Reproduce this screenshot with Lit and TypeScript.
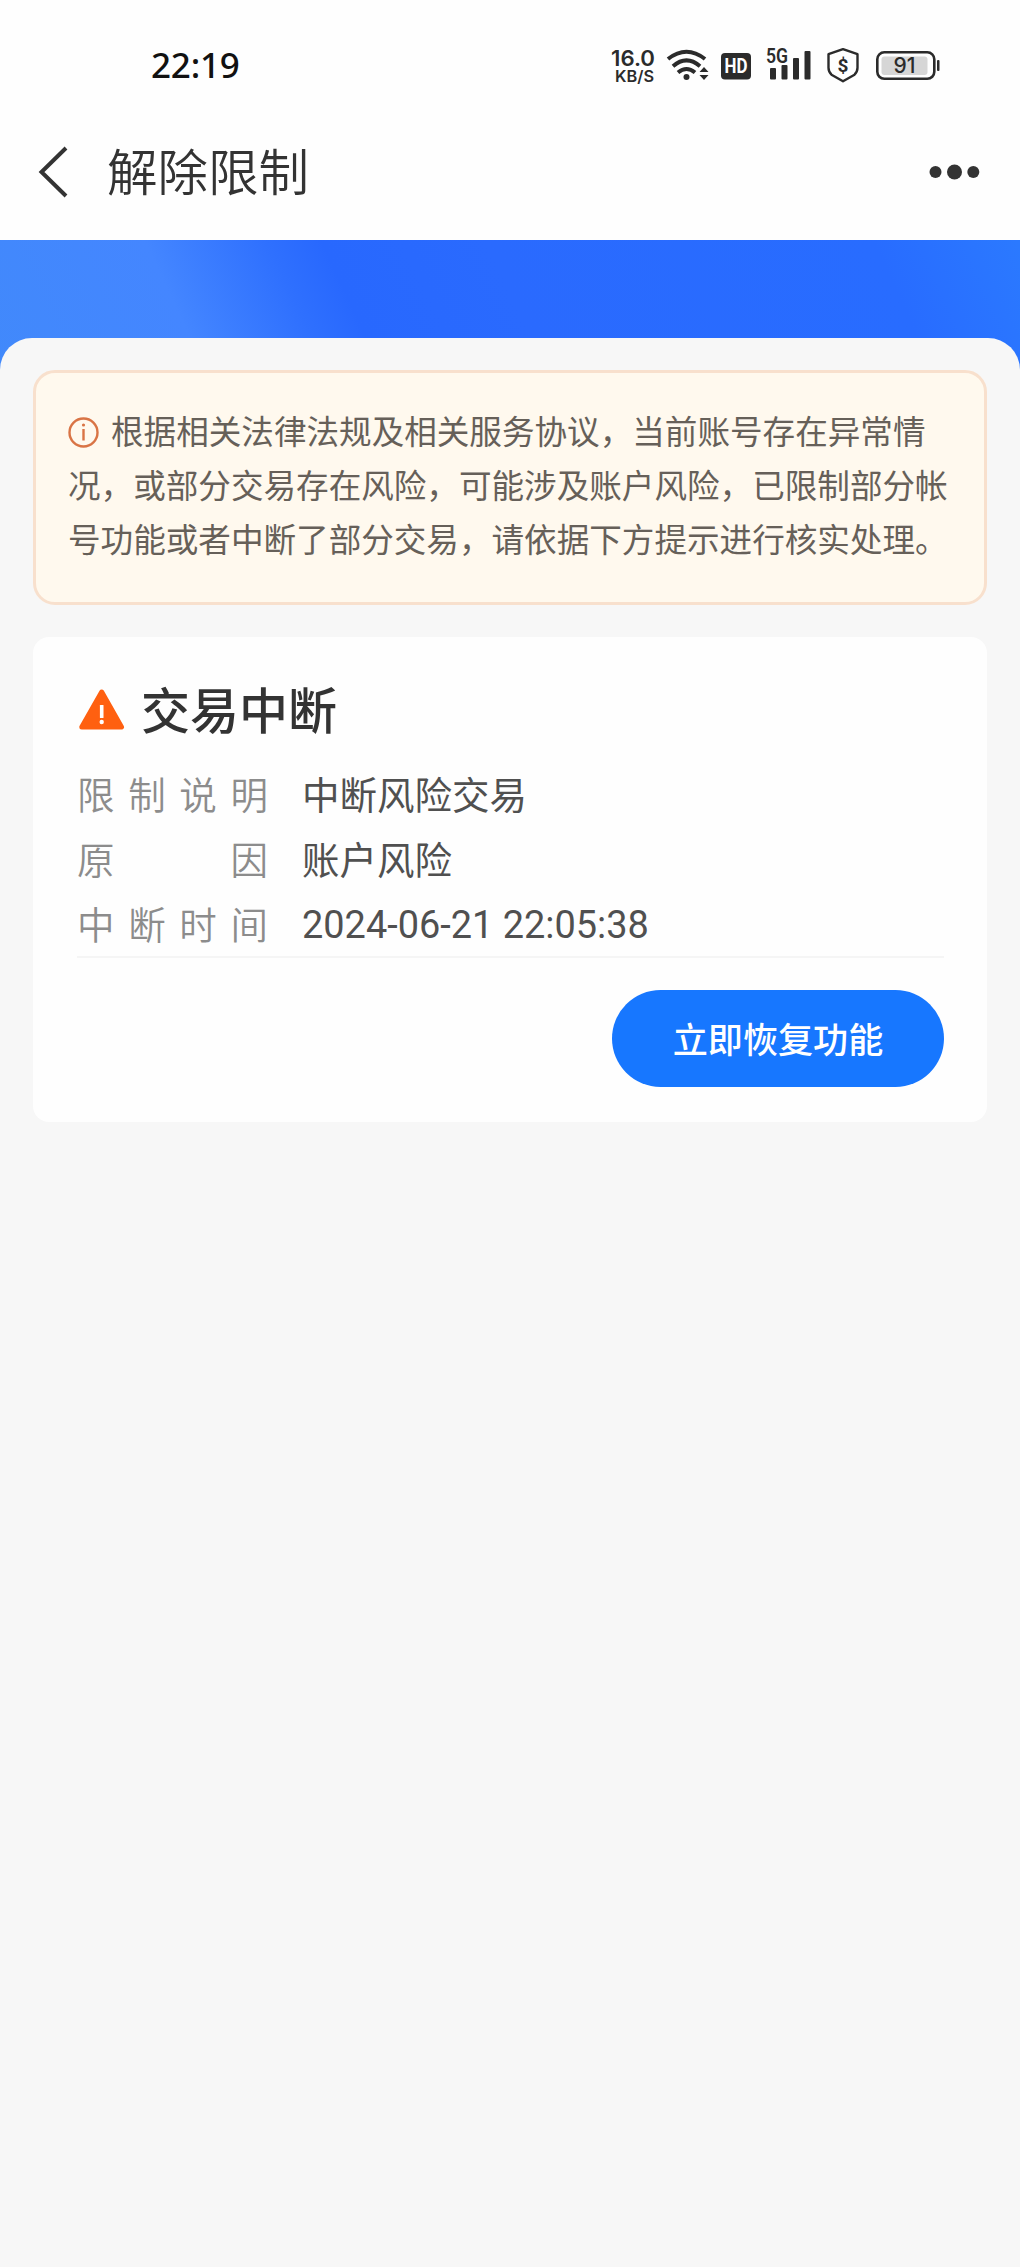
import { LitElement, html, css, svg } from "lit";
import { customElement } from "lit/decorators.js";

const INK = "#2b2b2b";

@customElement("status-bar")
class StatusBar extends LitElement {
  static styles = css`
    :host { display: flex; justify-content: space-between; align-items: flex-start; height: 104px; padding: 0 76px 0 151px; }
    .time { font: 500 35px/50px "Noto Sans", sans-serif; color: #111; padding-top: 40px; letter-spacing: -0.2px; }
    .icons { display: flex; padding-top: 40px; }
    svg { display: block; font-family: Roboto, sans-serif; }
  `;
  render() {
    return html`
      <div class="time">22:19</div>
      <div class="icons">
        <svg width="50" height="50" viewBox="610 40 50 50" fill="${INK}">
          <text x="611" y="66" font-size="21.500" font-weight="600" font-family="Inter" textLength="44" lengthAdjust="spacingAndGlyphs">16.0</text>
          <text x="615" y="82" font-size="16" font-weight="600" font-family="Inter" textLength="39" lengthAdjust="spacingAndGlyphs">KB/S</text>
        </svg>
        <svg width="55" height="50" viewBox="660 40 55 50" fill="none" stroke="${INK}" stroke-width="4">
          <path d="M668 59Q686.500 44.500 705 59M673 66.200Q686.500 54.500 700 66.200M678 72.500Q686.500 65.500 695 72.500" />
          <circle cx="686.500" cy="77" r="3" fill="${INK}" stroke="none" />
          <path d="M699.500 72h9L704 67zM699.500 75h9L704 80z" fill="${INK}" stroke="none" />
        </svg>
        <svg width="45" height="50" viewBox="715 40 45 50">
          <rect x="721" y="53" width="30" height="26.500" rx="4" fill="${INK}" />
          <text x="724.500" y="73" font-size="19.500" font-weight="700" fill="#fff" textLength="23" lengthAdjust="spacingAndGlyphs">HD</text>
        </svg>
        <svg width="60" height="50" viewBox="760 40 60 50" fill="${INK}">
          <text x="766" y="63" font-size="19.500" font-weight="600" textLength="22" lengthAdjust="spacingAndGlyphs">5G</text>
          ${[[770, 68], [781.5, 65], [793, 58], [804.5, 51]].map(
            ([x, y]) => svg`<rect x=${x} y=${y} width="6" height=${79.5 - y} rx="1" />`,
          )}
        </svg>
        <svg width="50" height="50" viewBox="820 40 50 50">
          <path d="M843 49.500L857.500 54.500V68Q857.500 72 854.500 75L843 81.500L831.500 75Q828.500 72 828.500 68V54.500Z" fill="none" stroke="${INK}" stroke-width="2.400" stroke-linejoin="round" transform="translate(0 -.3)" />
          <text x="843" y="71.500" text-anchor="middle" font-size="19" font-weight="700" fill="${INK}">$</text>
        </svg>
        <svg width="74" height="50" viewBox="870 40 74 50">
          <rect x="877.300" y="52.300" width="57" height="26.500" rx="7" fill="none" stroke="${INK}" stroke-width="2.600" />
          <rect x="881.500" y="56.500" width="46" height="18.500" rx="3" fill="#d6d6d6" />
          <rect x="937" y="60" width="2.500" height="11" rx="1" fill="${INK}" />
          <text x="904.500" y="73.300" text-anchor="middle" font-size="21" font-weight="500" font-family="Inter" fill="${INK}">91</text>
        </svg>
      </div>
    `;
  }
}

@customElement("nav-bar")
class NavBar extends LitElement {
  static styles = css`
    :host { display: flex; align-items: center; height: 136px; }
    .back { margin-left: 29px; }
    .title { flex: 1; margin: 0 0 6px 28px; font-size: 50.5px; line-height: 60px; color: #333; font-weight: 350; }
    .more { margin-right: 34px; }
    svg { display: block; }
  `;
  render() {
    return html`
      <svg class="back" width="50" height="60" viewBox="0 0 50 60" fill="none" stroke="#333" stroke-width="4">
        <path d="M37 6L12.500 30L37 54" />
      </svg>
      <div class="title">解除限制</div>
      <svg class="more" width="60" height="20" viewBox="0 0 60 20" fill="#333">
        <circle cx="9.500" cy="10" r="6" /><circle cx="28.500" cy="10" r="7.500" /><circle cx="47.300" cy="10" r="6" />
      </svg>
    `;
  }
}

@customElement("app-root")
class AppRoot extends LitElement {
  static styles = css`
    :host { display: flex; flex-direction: column; width: 1020px; height: 2267px; box-sizing: border-box; background: #fefefe; font-family: "Noto Sans CJK SC", sans-serif; overflow: hidden; }
    .hero { flex: 1; display: flex; padding-top: 98px; background: linear-gradient(65deg, #4189fb 0, #4486ff 190px, #2f70fe 300px, #2868fe 350px, #2a6afe 500px, #286cff 850px, #2b79ff 980px) 0 0 / 1020px 140px no-repeat #f7f7f7; }
    .sheet { flex: 1; background: #f7f7f7; border-radius: 32px 32px 0 0; padding: 32px 33px 0; }
    .notice { box-sizing: border-box; height: 235px; border: 3px solid #f8e0cd; border-radius: 22px; background: #fff9ee; padding: 30px 30px 0 32px; font-size: 32.6px; line-height: 54.2px; color: #666059; white-space: nowrap; }
    .info { display: inline-block; width: 31px; height: 31px; margin-right: 12px; vertical-align: -3.5px; }
    .card { box-sizing: border-box; height: 485px; margin-top: 32px; border-radius: 16px; background: #fefefe; padding: 40px 43px 0 44px; }
    .head { display: flex; align-items: center; height: 66px; gap: 15px; font-size: 49px; font-weight: 500; color: #333; }
    .head svg { display: block; }
    .head span { margin-bottom: 6px; }
    .rows { padding-top: 17px; height: 196px; border-bottom: 2px solid #f5f5f5; display: grid; grid-auto-rows: 65px; box-sizing: content-box; font-size: 37.5px; line-height: 65px; }
    .row { display: flex; }
    .label { display: flex; justify-content: space-between; width: 191px; margin-right: 34px; color: #8c8c8c; font-weight: 350; }
    .value { color: #505050; }
    .latin { font-family: Roboto, sans-serif; font-size: 37.9px; padding-top: 3px; }
    .actions { display: flex; justify-content: flex-end; padding-top: 32px; }
    .button { border: 0; margin: 0; padding: 0 0 2px; width: 332px; height: 97px; border-radius: 49px; background: #1777ff; color: #fff; font: 500 35.1px/95px "Noto Sans CJK SC", sans-serif; }
  `;
  private rows = [
    { label: "限制说明", value: "中断风险交易", latin: false },
    { label: "原因", value: "账户风险", latin: false },
    { label: "中断时间", value: "2024-06-21 22:05:38", latin: true },
  ];
  render() {
    return html`
      <status-bar></status-bar>
      <nav-bar></nav-bar>
      <main class="hero">
        <div class="sheet">
          <div class="notice">
            <svg class="info" viewBox="0 0 31 31"><circle cx="15.500" cy="15.500" r="14" fill="none" stroke="#d97445" stroke-width="2.400" /><rect x="14.300" y="12" width="2.400" height="11.500" fill="#d97445" /><circle cx="15.500" cy="8" r="1.600" fill="#d97445" /></svg>根据相关法律法规及相关服务协议，当前账号存在异常情<br />况，或部分交易存在风险，可能涉及账户风险，已限制部分帐<br />号功能或者中断了部分交易，请依据下方提示进行核实处理。
          </div>
          <section class="card">
            <div class="head">
              <svg width="49" height="44" viewBox="0 0 49 44">
                <path d="M24.700 4L44.500 39H4.800Z" fill="#ff6010" stroke="#ff6010" stroke-width="5" stroke-linejoin="round" />
                <rect x="22.900" y="17" width="3.600" height="13" rx=".5" fill="#fff" /><circle cx="24.700" cy="34" r="2.200" fill="#fff" />
              </svg>
              <span>交易中断</span>
            </div>
            <div class="rows">
              ${this.rows.map(
                (r) => html`<div class="row">
                  <div class="label">${[...r.label].map((c) => html`<span>${c}</span>`)}</div>
                  <div class="value ${r.latin ? "latin" : ""}">${r.value}</div>
                </div>`,
              )}
            </div>
            <div class="actions"><button class="button">立即恢复功能</button></div>
          </section>
        </div>
      </main>
    `;
  }
}
